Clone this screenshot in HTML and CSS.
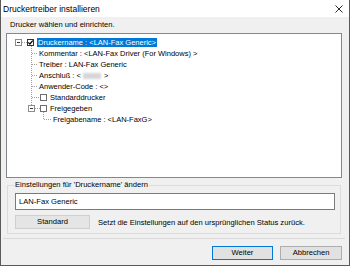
FILE: index.html
```html
<!DOCTYPE html>
<html lang="de">
<head>
<meta charset="utf-8">
<title>Druckertreiber installieren</title>
<link rel="stylesheet" href="styles.css">
</head>
<body>
<div class="window">
  <div class="titlebar">
    <span class="title">Druckertreiber installieren</span>
    <svg class="close" width="8" height="8" viewBox="0 0 8 8"><path d="M0.5 0.5 L7.5 7.5 M7.5 0.5 L0.5 7.5" stroke="#111" stroke-width="0.9" fill="none"/></svg>
  </div>
  <div class="content">
    <div class="caption">Drucker wählen und einrichten.</div>
    <div class="tree">
      <svg class="tree-lines" width="80" height="100" viewBox="0 0 80 100">
        <g stroke="#a0a0a0" stroke-width="1" stroke-dasharray="1 1" fill="none" shape-rendering="crispEdges">
          <path d="M15 8.5 H20"/>
          <path d="M24.5 12 V71"/>
          <path d="M25 19.5 H31 M25 30.5 H31 M25 41.5 H31 M25 52.5 H31 M25 63.5 H33"/>
          <path d="M28 74.5 H33"/>
          <path d="M36.5 78 V85.5 H45"/>
        </g>
        <g fill="#fff" stroke="#8c8c8c" shape-rendering="crispEdges">
          <rect x="8.5" y="5.5" width="6" height="6"/>
          <rect x="21.5" y="71.5" width="6" height="6"/>
        </g>
        <g stroke="#333" shape-rendering="crispEdges">
          <path d="M10 8.5 H13"/>
          <path d="M23 74.5 H26"/>
        </g>
      </svg>
      <div class="row lvl0"><span class="cb checked"><svg width="5" height="5" viewBox="0 0 5 5"><path d="M0.3 2.4 L1.9 4 L4.7 0.6" stroke="#000" stroke-width="1.2" fill="none"/></svg></span><span class="sel">Druckername : &lt;LAN-Fax Generic&gt;</span></div>
      <div class="row lvl1">Kommentar : &lt;LAN-Fax Driver (For Windows) &gt;</div>
      <div class="row lvl1">Treiber : LAN-Fax Generic</div>
      <div class="row lvl1">Anschluß : &lt;<span class="redact"></span>&gt;</div>
      <div class="row lvl1">Anwender-Code : &lt;&gt;</div>
      <div class="row lvl1cb"><span class="cb"></span>Standarddrucker</div>
      <div class="row lvl1cb"><span class="cb"></span>Freigegeben</div>
      <div class="row lvl2">Freigabename : &lt;LAN-FaxG&gt;</div>
    </div>
    <fieldset class="group">
      <legend>Einstellungen für 'Druckername' ändern</legend>
      <div class="field">LAN-Fax Generic</div>
      <div class="reset-row">
        <button class="btn std">Standard</button>
        <span>Setzt die Einstellungen auf den ursprünglichen Status zurück.</span>
      </div>
    </fieldset>
    <div class="sep"></div>
    <div class="actions">
      <button class="btn default next">Weiter</button>
      <button class="btn cancel">Abbrechen</button>
    </div>
  </div>
</div>
</body>
</html>
```

FILE: styles.css
```css
* { box-sizing: border-box; }
html, body { margin: 0; padding: 0; }
body {
  font-family: "Liberation Sans", Arial, sans-serif;
  font-size: 7.6px;
  color: #000;
  background: #fff;
}
.window {
  width: 350px;
  height: 266px;
  border: 1px solid #5a5a5a;
  border-top: 0;
  background: #f0f0f0;
  display: flex;
  flex-direction: column;
}
.titlebar {
  height: 17px;
  flex: none;
  background: #fff;
  display: flex;
  align-items: center;
  justify-content: space-between;
  padding: 0 6px 0 2px;
}
.title { font-size: 8.5px; line-height: 12px; }
.close { display: block; }
.content {
  flex: 1;
  display: flex;
  flex-direction: column;
  padding: 3px 7px 0 5px;
}
.caption {
  line-height: 10px;
  padding-left: 4px;
}
.tree {
  margin-top: 3px;
  height: 145px;
  flex: none;
  border: 1px solid #828790;
  background: #fff;
  position: relative;
  padding-top: 3px;
}
.tree-lines {
  position: absolute;
  left: 0;
  top: 0;
}
.row {
  height: 11px;
  line-height: 11px;
  display: flex;
  align-items: center;
  white-space: nowrap;
  font-size: 7.5px;
}
.lvl0 { padding-left: 20px; }
.lvl1 { padding-left: 32px; }
.lvl1cb { padding-left: 33px; }
.lvl2 { padding-left: 46px; }
.cb {
  width: 7px;
  height: 7px;
  flex: none;
  border: 1px solid #6e6e6e;
  background: #fff;
  margin-right: 3px;
  display: flex;
  align-items: center;
  justify-content: center;
}
.cb.checked { border-color: #333; }
.cb svg { display: block; }
.sel {
  background: #0078d7;
  color: #fff;
  line-height: 9px;
  height: 9px;
  padding: 0 1px;
}
.redact {
  display: inline-block;
  width: 18px;
  height: 6px;
  margin: 0 3px 0 2px;
  background: #d6d6d6;
  filter: blur(1px);
}
.group {
  margin: 2px 1px 0 1px;
  border: 1px solid #dcdcdc;
  padding: 0 5px 4px 7px;
  min-width: 0;
}
.group legend {
  padding: 0 1px;
  margin-left: -1px;
  line-height: 10px;
}
.field {
  margin-top: 3px;
  height: 17px;
  border: 1px solid #7a7a7a;
  background: #fff;
  padding-left: 3px;
  line-height: 15px;
}
.reset-row {
  margin-top: 5px;
  display: flex;
  align-items: center;
  gap: 8px;
}
.btn {
  font-family: inherit;
  font-size: 7.6px;
  color: #000;
  height: 14px;
  line-height: 12px;
  padding: 0;
  background: #e1e1e1;
  border: 1px solid #adadad;
  border-radius: 0;
}
.std { width: 75px; background: #e5e5e5; border-color: #cfcfcf; }
.sep {
  margin: 4px -3px 0 -3px;
  height: 1px;
  background: #d9d9d9;
}
.actions {
  margin-top: 7px;
  display: flex;
  justify-content: flex-end;
  gap: 7px;
}
.next { width: 61px; }
.cancel { width: 62px; }
.default { border-color: #0078d7; }
```
